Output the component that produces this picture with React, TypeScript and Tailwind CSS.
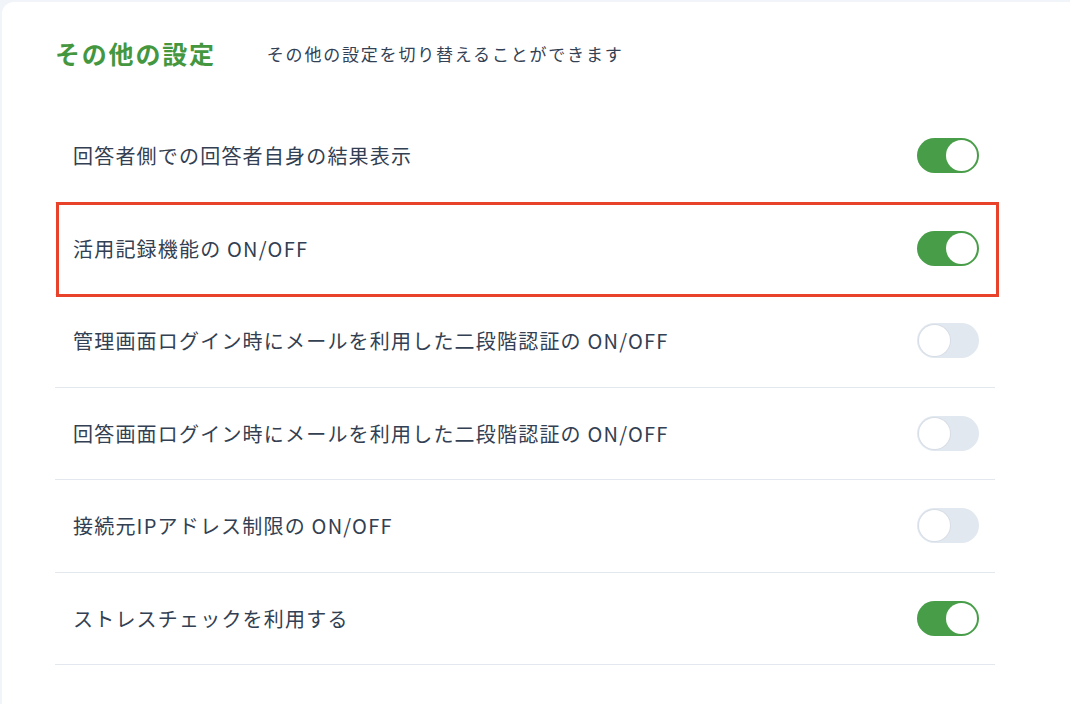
import React, { useState } from "react";

const settings = [
  { label: "回答者側での回答者自身の結果表示", on: true },
  { label: "活用記録機能の ON/OFF", on: true, highlight: true },
  { label: "管理画面ログイン時にメールを利用した二段階認証の ON/OFF", on: false },
  { label: "回答画面ログイン時にメールを利用した二段階認証の ON/OFF", on: false },
  { label: "接続元IPアドレス制限の ON/OFF", on: false },
  { label: "ストレスチェックを利用する", on: true },
];

function Toggle({ on, onClick }: { on: boolean; onClick: () => void }) {
  return (
    <button
      onClick={onClick}
      className={`relative w-[62px] h-[35px] rounded-full flex items-center px-[2px] ${
        on ? "bg-[#489e48] justify-end" : "bg-[#e2e8f0] justify-start"
      }`}
    >
      <span
        className={`w-[31px] h-[31px] rounded-full bg-white ${
          on ? "" : "shadow-[0_0_0_1px_#d7dde6]"
        }`}
      />
    </button>
  );
}

export default function App() {
  const [items, setItems] = useState(settings);

  return (
    <div
      className="w-[1070px] h-[704px] bg-[#f1f5f9] pl-[2px] pt-[2px] overflow-hidden"
      style={{ fontFamily: '"Noto Sans CJK JP", "Noto Sans", sans-serif' }}
    >
      <div className="w-[1100px] h-[740px] bg-white rounded-tl-[12px] pl-[53px] pt-[36px]">
        <div className="flex items-center h-[32px]">
          <h2 className="text-[25px] font-bold text-[#44973f] tracking-[1.8px] -mt-[1px]">その他の設定</h2>
          <p className="ml-[51px] text-[17px] text-[#334155] tracking-[1.8px]">その他の設定を切り替えることができます</p>
        </div>

        <div className="w-[940px] mt-[40px]">
          {items.map((s, i) => (
            <div
              key={i}
              className="relative h-[92.5px] border-b border-[#e3e7ee] flex items-center justify-between pl-[18px] pr-[16px]"
            >
              <span className="text-[20px] text-[#333f52] tracking-[1.2px] mt-[1px]">{s.label}</span>
              <Toggle
                on={s.on}
                onClick={() =>
                  setItems(items.map((it, j) => (j === i ? { ...it, on: !it.on } : it)))
                }
              />
              {s.highlight && (
                <div className="absolute left-[1px] -right-[4px] -top-[1px] -bottom-[3px] border-[3px] border-[#e8432a] pointer-events-none" />
              )}
            </div>
          ))}
        </div>
      </div>
    </div>
  );
}
